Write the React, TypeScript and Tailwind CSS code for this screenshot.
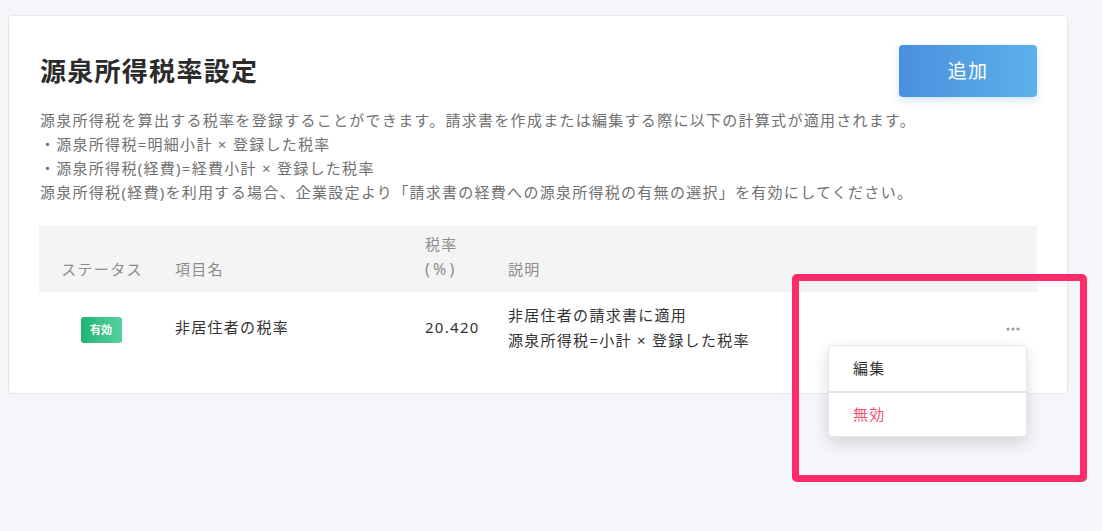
const FONT = "font-['Noto_Sans','Noto_Sans_CJK_JP',sans-serif]"

type Rate = {
  id: string
  active: boolean
  name: string
  rate: string
  notes: string[]
}

const RATES: Rate[] = [
  {
    id: '1',
    active: true,
    name: '非居住者の税率',
    rate: '20.420',
    notes: ['非居住者の請求書に適用', '源泉所得税=小計 × 登録した税率'],
  },
]

function MoreDots() {
  return (
    <svg width="14" height="4" viewBox="0 0 14 4" className="inline-block text-[#9a9a9a]" fill="currentColor">
      <circle cx="2" cy="2" r="1.6" />
      <circle cx="7" cy="2" r="1.6" />
      <circle cx="12" cy="2" r="1.6" />
    </svg>
  )
}

export default function App() {
  return (
    <div className={`relative min-h-screen bg-[#f5f6fa] tracking-[0.08em] ${FONT}`}>
      <div className="pt-[15px] pl-[8px] w-[1068px]">
        <section className="rounded-[4px] border border-[#e4e6eb] bg-white pt-[29px] px-[30px] pb-[30px]">
          <div className="flex items-center justify-between h-[52px]">
            <h1 className="text-[26px] font-bold text-[#2b2b2b] pl-[1px]">源泉所得税率設定</h1>
            <button className="w-[138px] h-[52px] rounded-[4px] bg-gradient-to-r from-[#4a8fe0] to-[#5db1e9] text-white text-[19px] shadow-[0_3px_8px_rgba(74,144,226,0.25)]">
              追加
            </button>
          </div>

          <div className="mt-[11px] text-[15px] leading-[24px] text-[#707070] pl-[1px]">
            <p>源泉所得税を算出する税率を登録することができます。請求書を作成または編集する際に以下の計算式が適用されます。</p>
            <p>・源泉所得税=明細小計 × 登録した税率</p>
            <p>・源泉所得税(経費)=経費小計 × 登録した税率</p>
            <p>源泉所得税(経費)を利用する場合、企業設定より「請求書の経費への源泉所得税の有無の選択」を有効にしてください。</p>
          </div>

          <table className="mt-[22px] w-full table-fixed border-collapse text-[15px] leading-[25px]">
            <colgroup>
              <col className="w-[124px]" />
              <col className="w-[250px]" />
              <col className="w-[83px]" />
              <col />
              <col className="w-[120px]" />
            </colgroup>
            <thead>
              <tr className="h-[66px] bg-[#f4f4f4] text-[#8c8c8c]">
                <th className="align-bottom pb-[10px] text-center font-normal pl-[2px]">ステータス</th>
                <th className="align-bottom pb-[10px] pl-[12px] text-left font-normal">項目名</th>
                <th className="align-bottom pb-[10px] pl-[12px] text-left font-normal">
                  税率
                  <br />
                  <span className="text-[16px] tracking-[0.2em]">(%)</span>
                </th>
                <th className="align-bottom pb-[10px] pl-[12px] text-left font-normal">説明</th>
                <th />
              </tr>
            </thead>
            <tbody>
              {RATES.map((r) => (
                <tr key={r.id} className="text-[#333]">
                  <td className="pt-[11px] pb-[10px] text-center align-middle">
                    <span className="inline-flex items-center justify-center w-[41px] h-[26px] mt-[3px] rounded-[3px] bg-gradient-to-r from-[#1db575] to-[#56d19e] text-white text-[11px] font-bold tracking-normal">
                      {r.active ? '有効' : '無効'}
                    </span>
                  </td>
                  <td className="pl-[12px] align-middle">{r.name}</td>
                  <td className="pl-[12px] align-middle">{r.rate}</td>
                  <td className="pl-[12px] pt-[11px] pb-[10px] align-top">
                    {r.notes.map((n) => (
                      <div key={n}>{n}</div>
                    ))}
                  </td>
                  <td className="pr-[17px] text-right align-middle">
                    <MoreDots />
                  </td>
                </tr>
              ))}
            </tbody>
          </table>
        </section>
      </div>

      {/* open row menu */}
      <div className="absolute left-[828px] top-[345px] w-[199px] rounded-[4px] border border-[#e6e6e6] bg-white text-[15px] shadow-[0_6px_16px_rgba(0,0,0,0.14)]">
        <div className="h-[45px] flex items-center pl-[24px] text-[#333]">編集</div>
        <div className="h-[45px] flex items-center pl-[24px] text-[#ee5470] border-t-2 border-[#e3e3e3]">無効</div>
      </div>

      {/* highlight annotation */}
      <div className="absolute left-[792px] top-[274px] w-[295px] h-[208px] rounded-[5px] border-[7px] border-[#ff2a68] pointer-events-none" />
    </div>
  )
}
